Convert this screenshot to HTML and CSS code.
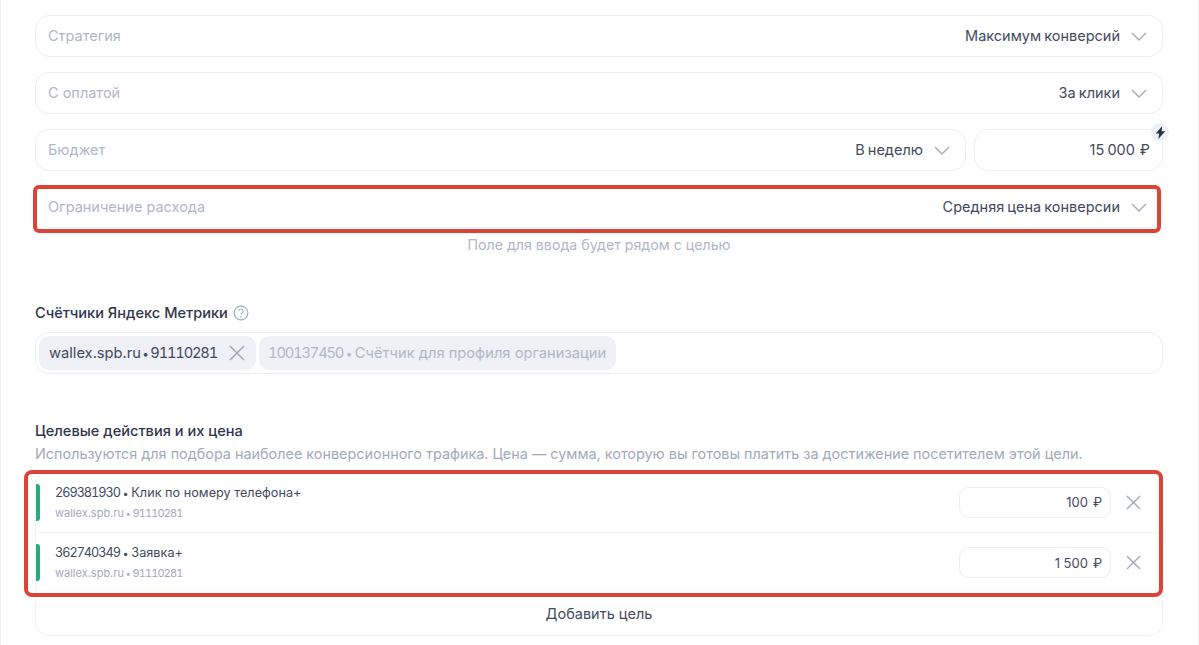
FILE: index.html
```html
<!DOCTYPE html>
<html lang="ru">
<head>
<meta charset="utf-8">
<title>Стратегия</title>
<link rel="stylesheet" href="styles.css">
</head>
<body>
<main class="page">
  <div class="field field-first">
    <span class="label">Стратегия</span>
    <span class="value">Максимум конверсий</span>
    <svg class="chev" viewBox="0 0 16 9"><path d="M1 1l7 7 7-7"/></svg>
  </div>
  <div class="field">
    <span class="label">С оплатой</span>
    <span class="value">За клики</span>
    <svg class="chev" viewBox="0 0 16 9"><path d="M1 1l7 7 7-7"/></svg>
  </div>
  <div class="budget">
    <div class="field field-grow">
      <span class="label">Бюджет</span>
      <span class="value">В неделю</span>
      <svg class="chev" viewBox="0 0 16 9"><path d="M1 1l7 7 7-7"/></svg>
    </div>
    <div class="field field-sum">
      <span class="value value-sum">15 000<span class="rub">₽</span></span>
      <span class="bolt"><svg viewBox="0 0 10 12"><path d="M6.6 0L.6 7h3.2L3 12l6.4-7.2H6z"/></svg></span>
    </div>
  </div>
  <div class="field field-marked">
    <span class="label">Ограничение расхода</span>
    <span class="value">Средняя цена конверсии</span>
    <svg class="chev" viewBox="0 0 16 9"><path d="M1 1l7 7 7-7"/></svg>
    <span class="frame frame-limit"></span>
  </div>
  <p class="hint">Поле для ввода будет рядом с целью</p>

  <h3 class="title title-counters">Счётчики Яндекс Метрики
    <svg class="help" viewBox="0 0 16 16"><circle cx="8" cy="8" r="6.9"/><path d="M5.9 6.2a2.1 2.1 0 1 1 3.3 1.7c-.8.5-1.2.9-1.2 1.8"/><circle class="dot" cx="8" cy="11.8" r=".8"/></svg>
  </h3>
  <div class="tags">
    <span class="tag"><span>wallex.spb.ru<span class="sep"> • </span><span class="num">91110281</span></span>
      <svg class="x x-tag" viewBox="0 0 16 16"><path d="M1 1l14 14M15 1L1 15"/></svg>
    </span>
    <span class="tag tag-off"><span><span class="num">100137450</span><span class="sep"> • </span>Счётчик для профиля организации</span></span>
  </div>

  <h3 class="title title-goals">Целевые действия и их цена</h3>
  <p class="desc">Используются для подбора наиболее конверсионного трафика. Цена — сумма, которую вы готовы платить за достижение посетителем этой цели.</p>
  <div class="goals">
    <span class="frame frame-goals"></span>
    <div class="goal">
      <span class="bar"></span>
      <div class="goal-text">
        <div class="goal-name"><span class="num">269381930</span><span class="sep"> • </span>Клик по номеру телефона+</div>
        <div class="goal-sub">wallex.spb.ru<span class="sep"> • </span><span class="num">91110281</span></div>
      </div>
      <div class="price">100<span class="rub">₽</span></div>
      <svg class="x x-goal" viewBox="0 0 16 16"><path d="M1 1l14 14M15 1L1 15"/></svg>
    </div>
    <div class="goal goal-second">
      <span class="bar"></span>
      <div class="goal-text">
        <div class="goal-name"><span class="num">362740349</span><span class="sep"> • </span>Заявка+</div>
        <div class="goal-sub">wallex.spb.ru<span class="sep"> • </span><span class="num">91110281</span></div>
      </div>
      <div class="price">1 500<span class="rub">₽</span></div>
      <svg class="x x-goal" viewBox="0 0 16 16"><path d="M1 1l14 14M15 1L1 15"/></svg>
    </div>
    <div class="add">Добавить цель</div>
  </div>
</main>
</body>
</html>
```
FILE: styles.css
```css
* { box-sizing: border-box; }
html, body { margin: 0; height: 645px; overflow: hidden; background: #fff; }
body { font-family: Inter, "Noto Sans", sans-serif; color: #434a5e; }
.page {
  height: 645px;
  padding: 15px 35px 0 34px;
  border-left: 1px solid #eef0f4;
  border-right: 1px solid #eef0f4;
}
.field {
  position: relative;
  display: flex;
  align-items: center;
  height: 42px;
  margin-top: 15px;
  padding: 0 12px;
  border: 1px solid #eceef5;
  border-radius: 14px;
  font-size: 14.5px;
}
.field-first { margin-top: 0; }
.label { flex: 1; margin-bottom: 2px; color: #b1b6c7; }
.value { margin-bottom: 2px; color: #434a5e; word-spacing: -1px; }
.chev {
  width: 16px;
  height: 9px;
  margin-left: 11px;
  margin-right: 3px;
  fill: none;
  stroke: #a4a9ba;
  stroke-width: 1.4;
}
.budget { display: flex; gap: 8px; margin-top: 15px; }
.budget .field { margin-top: 0; }
.field-grow { flex: 1; }
.field-sum { width: 189px; justify-content: flex-end; }
.value-sum { word-spacing: -1px; }
.rub { margin-left: 5px; }
.bolt {
  position: absolute;
  top: -7px;
  right: -7px;
  display: flex;
  align-items: center;
  justify-content: center;
  width: 18px;
  height: 18px;
  border-radius: 50%;
  background: #eef1f7;
}
.bolt svg { width: 11px; height: 13px; fill: #2a3147; }
.frame {
  position: absolute;
  border: 4px solid #dc4338;
  border-radius: 6px;
  pointer-events: none;
}
.frame-limit { top: -2px; left: -3px; right: 1px; bottom: -6px; }
.hint {
  margin: 8px 0 0;
  text-align: center;
  font-size: 14.2px;
  line-height: 17px;
  color: #b1b6c7;
}
.title {
  margin: 0;
  font-size: 14.6px;
  line-height: 18px;
  font-weight: 500;
  color: #2f364b;
}
.title-counters { display: flex; align-items: center; gap: 5px; margin-top: 51px; }
.help { width: 16px; height: 16px; fill: none; stroke: #a4a9ba; stroke-width: 1.1; }
.help .dot { fill: #a4a9ba; stroke: none; }
.tags {
  display: flex;
  gap: 3px;
  height: 42px;
  margin-top: 10px;
  padding: 3px;
  border: 1px solid #eceef5;
  border-radius: 14px;
}
.tag {
  display: flex;
  align-items: center;
  padding: 0 10px;
  border-radius: 10px;
  background: #eff1f7;
  font-size: 14.7px;
  color: #434a5e;
}
.tag-off { padding: 0 10px 0 9px; color: #b1b6c7; }
.num { font-variant-numeric: tabular-nums; letter-spacing: -.08em; }
.sep { font-size: .8em; white-space: pre; }
.tag .sep { word-spacing: -2px; }
.tag-off .sep { word-spacing: -.8px; }
.goal-sub .sep { word-spacing: -.7px; }
.x { fill: none; stroke: #a4a9ba; stroke-width: 1.5; }
.x-tag { width: 16px; height: 16px; margin-left: 12px; margin-right: 1px; }
.title-goals { margin-top: 48px; }
.desc { margin: 5px 0 0; font-size: 14.4px; line-height: 18px; color: #a4a9ba; white-space: nowrap; }
.goals {
  position: relative;
  height: 165px;
  margin-top: 8px;
  border: 1px solid #f1f2f7;
  border-radius: 14px;
}
.frame-goals { top: -2px; left: -12px; right: -1px; bottom: 38px; border-radius: 8px; }
.goal {
  display: flex;
  align-items: center;
  height: 60px;
  padding-right: 21px;
}
.goal-second { border-top: 1px solid #f1f2f7; }
.bar { width: 4px; height: 37px; border-radius: 0 3px 3px 0; background: #27ad78; }
.goal-text { flex: 1; margin-left: 15px; }
.goal-name { font-size: 12.7px; line-height: 17px; color: #434a5e; }
.goal-sub { margin-top: 4px; font-size: 11px; line-height: 15px; color: #a4a9ba; }
.price {
  display: flex;
  align-items: center;
  justify-content: flex-end;
  width: 152px;
  height: 31px;
  padding-right: 8px;
  border: 1px solid #eceef5;
  border-radius: 10px;
  font-size: 13px;
}
.x-goal { width: 15px; height: 15px; margin-left: 15px; }
.add {
  display: flex;
  align-items: center;
  justify-content: center;
  height: 43px;
  font-size: 14.5px;
  color: #434a5e;
}
```
